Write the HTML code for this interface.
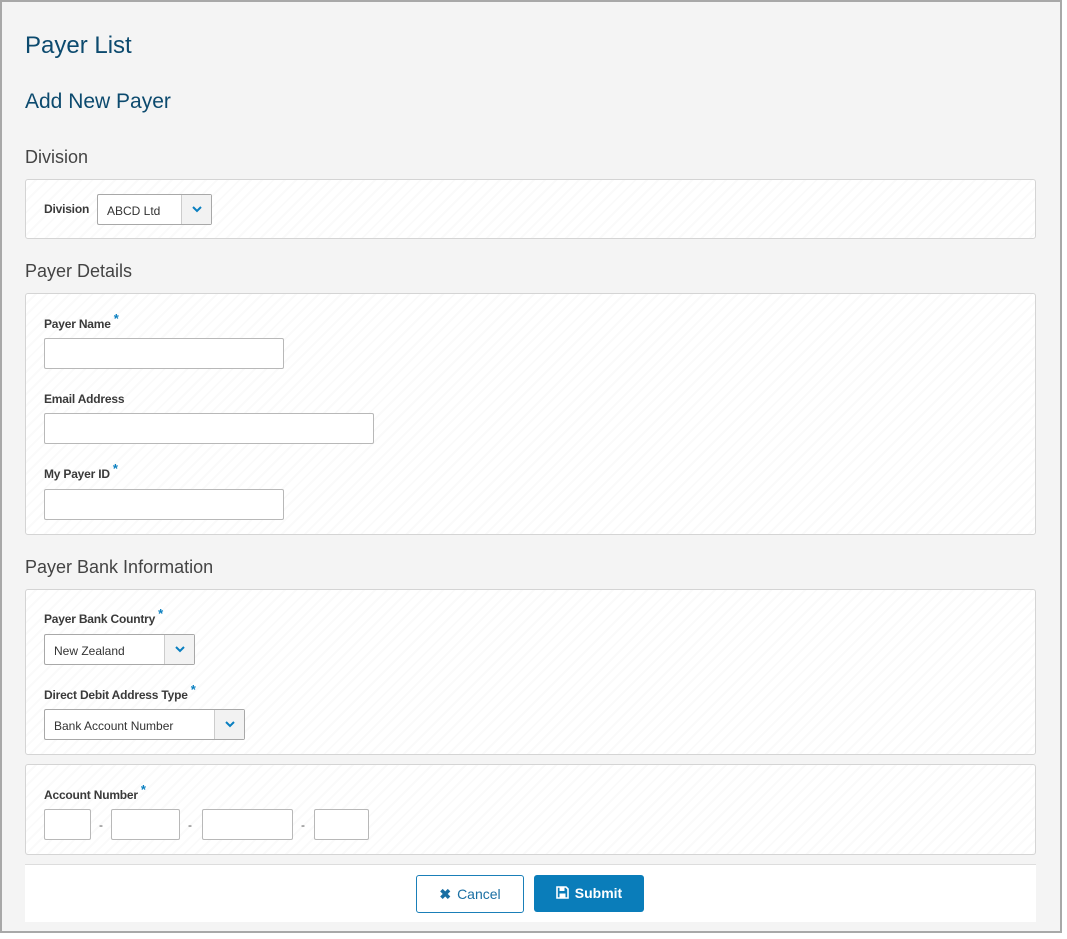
<!DOCTYPE html>
<html><head><style>
*{box-sizing:border-box;margin:0;padding:0}
body{width:1067px;height:939px;background:#fff;font-family:"Liberation Sans",sans-serif;position:relative;overflow:hidden}
#frame{position:absolute;left:0;top:0;width:1062px;height:933px;background:#f4f4f4;border:2px solid #a8a8a8}
.abs{position:absolute}
h1{position:absolute;font-weight:normal;color:#0c4a6e;font-size:24px;left:25px}
h2{position:absolute;font-weight:normal;color:#0c4a6e;font-size:21px;left:25px}
h3{position:absolute;font-weight:normal;color:#444;font-size:18px;left:25px}
.panel{position:absolute;left:25px;width:1011px;border:1px solid #d4d4d4;border-radius:3px;background:repeating-linear-gradient(135deg,#fff 0 6px,#fafafa 6px 8px)}
.lbl{position:absolute;font-size:12px;font-weight:bold;color:#3a3a3a;left:44px;letter-spacing:-0.2px}
.lbl b{color:#0a7fc0;font-size:13px;position:relative;top:-5px;margin-left:3px}
.inp{position:absolute;background:#fff;border:1px solid #b8b8b8;border-radius:2px;height:31px}
.sel{position:absolute;background:#fff;border:1px solid #a8a8a8;border-radius:2px;height:31px;font-size:12px;color:#333;padding:9px 0 0 9px}
.sel .dd{position:absolute;right:0;top:0;width:30px;height:29px;border-left:1px solid #ccc;background:#f2f2f2}
.sel .dd svg{position:absolute;left:10px;top:11px}
.dash{position:absolute;font-size:12px;color:#555;top:818px}
</style></head><body>
<div id="frame"></div>
<h1 style="top:32px">Payer List</h1>
<h2 style="top:90px">Add New Payer</h2>
<h3 style="top:147px">Division</h3>
<div class="panel" style="top:179px;height:60px"></div>
<div class="lbl" style="top:202px">Division</div>
<div class="sel" style="left:97px;top:194px;width:115px">ABCD Ltd<div class="dd"><svg width="10" height="7"><path d="M1 1l4 4 4-4" stroke="#0a7fc0" stroke-width="2" fill="none"/></svg></div></div>

<h3 style="top:261px">Payer Details</h3>
<div class="panel" style="top:293px;height:242px"></div>
<div class="lbl" style="top:316px">Payer Name<b>*</b></div>
<div class="inp" style="left:44px;top:338px;width:240px"></div>
<div class="lbl" style="top:392px">Email Address</div>
<div class="inp" style="left:44px;top:413px;width:330px"></div>
<div class="lbl" style="top:466px">My Payer ID<b>*</b></div>
<div class="inp" style="left:44px;top:489px;width:240px"></div>

<h3 style="top:557px">Payer Bank Information</h3>
<div class="panel" style="top:589px;height:166px"></div>
<div class="lbl" style="top:611px">Payer Bank Country<b>*</b></div>
<div class="sel" style="left:44px;top:634px;width:151px">New Zealand<div class="dd"><svg width="10" height="7"><path d="M1 1l4 4 4-4" stroke="#0a7fc0" stroke-width="2" fill="none"/></svg></div></div>
<div class="lbl" style="top:687px">Direct Debit Address Type<b>*</b></div>
<div class="sel" style="left:44px;top:709px;width:201px">Bank Account Number<div class="dd"><svg width="10" height="7"><path d="M1 1l4 4 4-4" stroke="#0a7fc0" stroke-width="2" fill="none"/></svg></div></div>

<div class="panel" style="top:764px;height:91px"></div>
<div class="lbl" style="top:787px">Account Number<b>*</b></div>
<div class="inp" style="left:44px;top:809px;width:47px"></div>
<div class="dash" style="left:99px">-</div>
<div class="inp" style="left:111px;top:809px;width:69px"></div>
<div class="dash" style="left:188px">-</div>
<div class="inp" style="left:202px;top:809px;width:91px"></div>
<div class="dash" style="left:301px">-</div>
<div class="inp" style="left:314px;top:809px;width:55px"></div>

<div class="abs" style="left:25px;top:864px;width:1011px;height:58px;background:#fff;border-top:1px solid #ddd"></div>
<div class="abs" style="left:416px;top:875px;width:108px;height:38px;border:1px solid #1a7fb8;border-radius:3px;background:#fff;color:#1a6fa3;font-size:14px;text-align:center;line-height:36px"><span style="font-weight:bold;margin-right:6px">✖</span>Cancel</div>
<div class="abs" style="left:534px;top:875px;width:110px;height:37px;border-radius:3px;background:#0a7dba;color:#fff;font-size:14px;font-weight:bold;text-align:center;line-height:37px"><svg width="13" height="13" style="vertical-align:-1px;margin-right:6px"><path d="M1 1h9l2 2v9H1z" fill="none" stroke="#fff" stroke-width="1.6"/><rect x="3.5" y="1.5" width="5" height="3.5" fill="#fff"/><rect x="3.5" y="7.5" width="6" height="4" fill="#fff"/></svg>Submit</div>
</body></html>
